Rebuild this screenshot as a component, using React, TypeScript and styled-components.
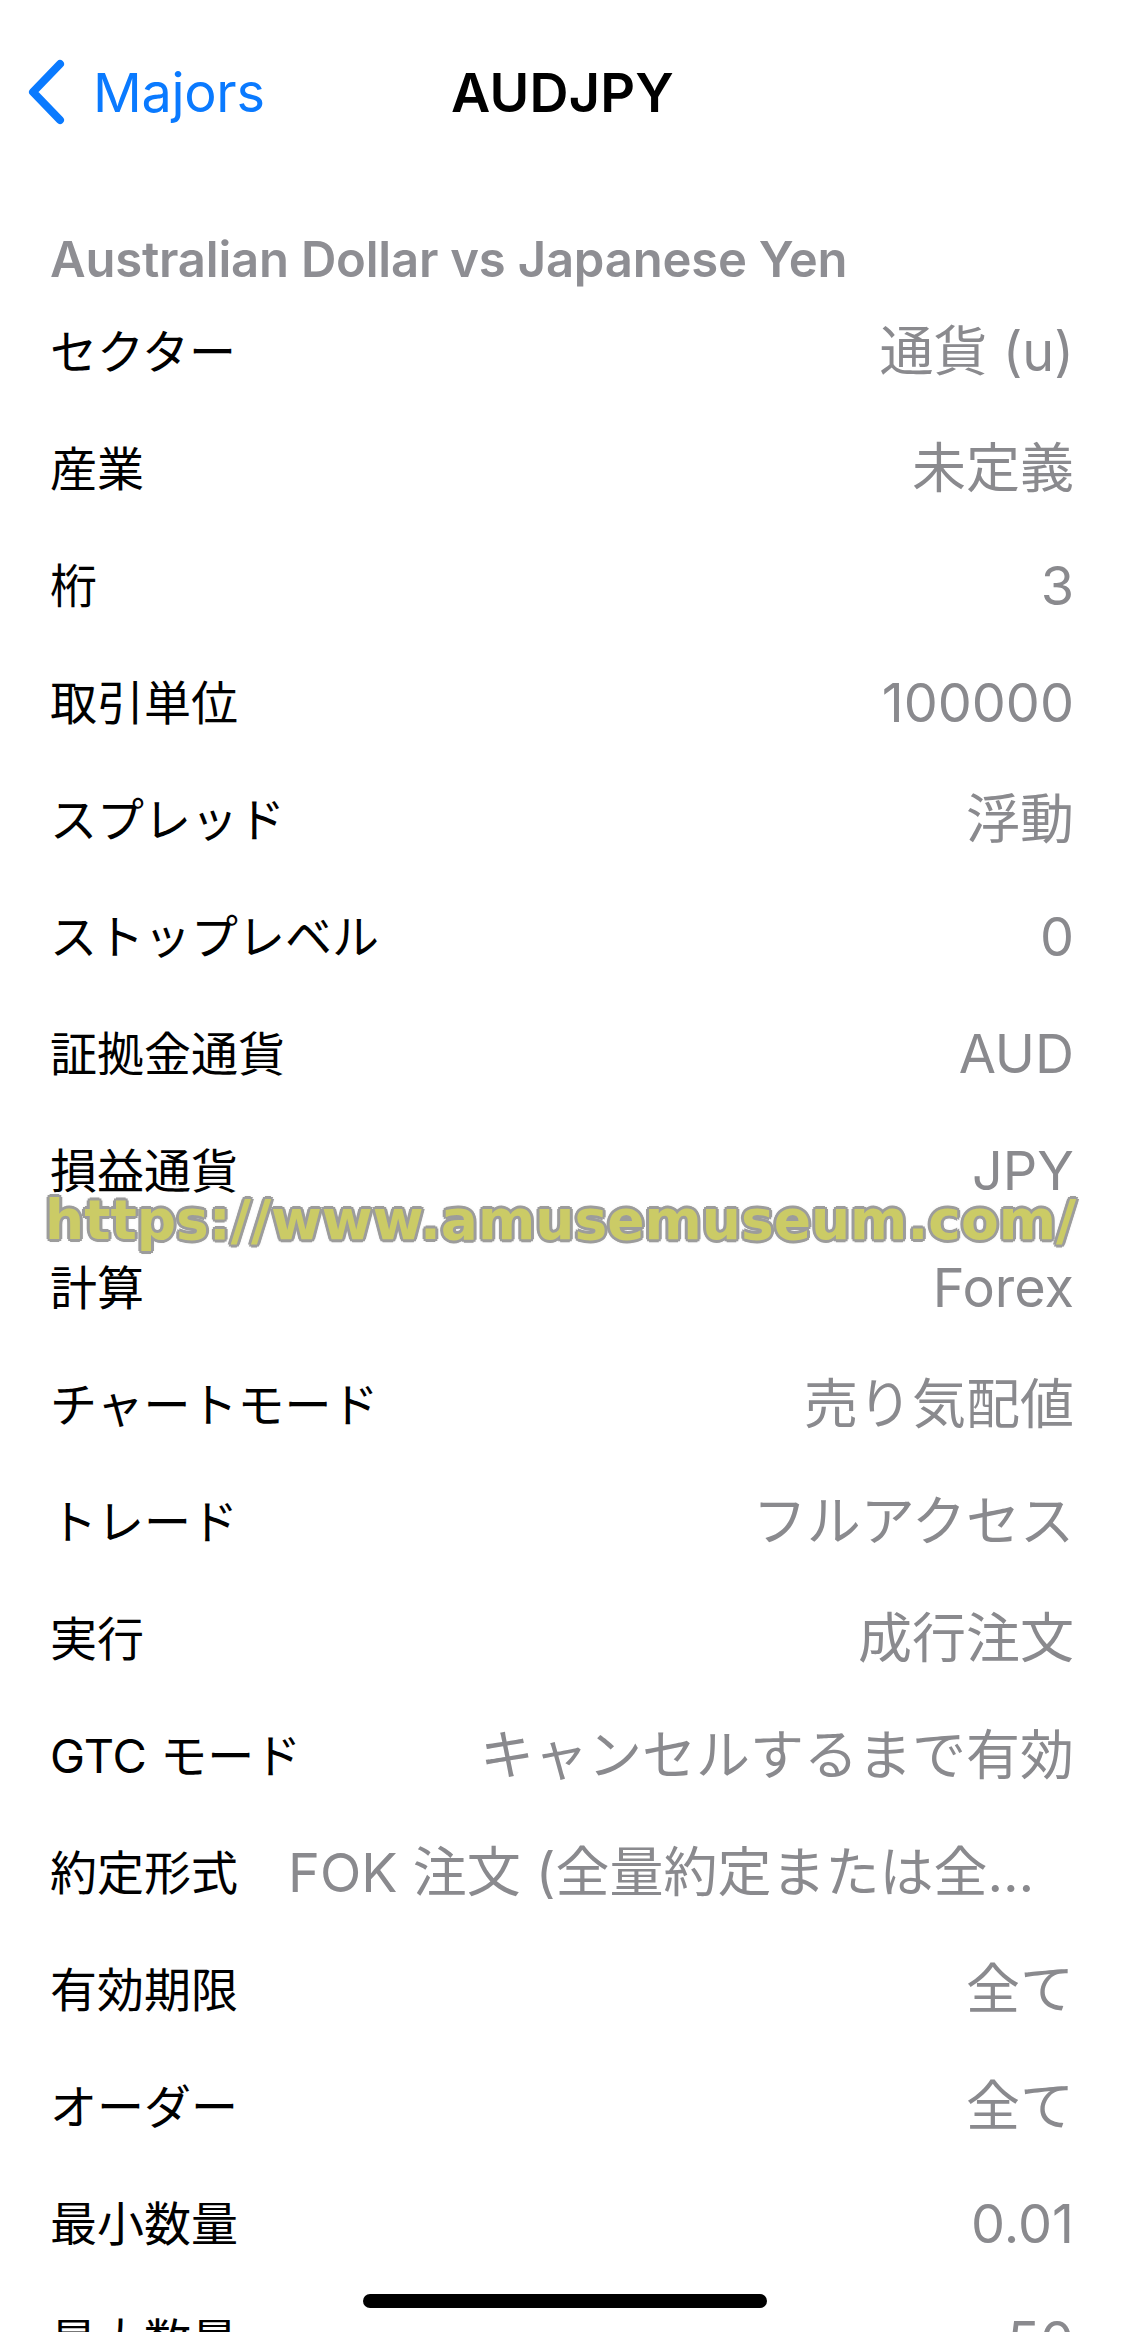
import React from "react";
import styled, { createGlobalStyle } from "styled-components";

const GlobalStyle = createGlobalStyle`
  html, body {
    margin: 0;
    padding: 0;
    background: #ffffff;
  }
  body {
    font-family: Inter, "Noto Sans CJK JP", sans-serif;
    -webkit-font-smoothing: antialiased;
  }
`;

const Screen = styled.div`
  position: relative;
  width: 1125px;
  height: 2332px;
  overflow: hidden;
  background: #ffffff;
  display: flex;
  flex-direction: column;
`;

const NavBar = styled.header`
  position: relative;
  height: 184px;
  display: flex;
  align-items: center;
  justify-content: center;
  flex-shrink: 0;
`;

const BackButton = styled.button`
  position: absolute;
  left: 27px;
  top: 50%;
  transform: translateY(-50%);
  display: flex;
  align-items: center;
  gap: 26px;
  border: 0;
  background: transparent;
  padding: 0;
  color: #0a7aff;
  font-family: Inter, sans-serif;
  font-size: 54px;
  font-weight: 400;
  letter-spacing: -0.3px;
  cursor: pointer;
`;

const Title = styled.h1`
  margin: 0;
  font-family: Inter, sans-serif;
  font-size: 54px;
  font-weight: 600;
  color: #000000;
  letter-spacing: 0.2px;
`;

const SectionHeading = styled.h2`
  margin: 0;
  padding: 46px 50px 4px;
  line-height: 60px;
  font-family: Inter, sans-serif;
  font-size: 49px;
  font-weight: 600;
  color: #8e8e93;
  letter-spacing: -0.2px;
`;

const List = styled.div`
  display: flex;
  flex-direction: column;
`;

const Row = styled.div`
  height: 117px;
  flex-shrink: 0;
  display: flex;
  align-items: center;
  justify-content: space-between;
  gap: 50px;
  padding: 0 51px 0 50px;
  line-height: 1.2;
`;

const Label = styled.span`
  flex-shrink: 0;
  font-size: 47px;
  color: #000000;
  white-space: nowrap;
`;

const Value = styled.span`
  flex: 1;
  min-width: 0;
  text-align: right;
  font-size: 54px;
  color: #8a8a8e;
  white-space: nowrap;
  overflow: hidden;
  text-overflow: ellipsis;
`;

const Watermark = styled.div`
  position: absolute;
  left: 45px;
  top: 1188px;
  font-family: "DejaVu Sans", sans-serif;
  font-weight: 700;
  font-size: 55px;
  letter-spacing: 0;
  color: #cbcb66;
  white-space: nowrap;
  pointer-events: none;
  text-shadow:
    3px 0 0 #9c9c9c, -3px 0 0 #9c9c9c, 0 3px 0 #9c9c9c, 0 -3px 0 #9c9c9c,
    2px 2px 0 #9c9c9c, -2px 2px 0 #9c9c9c, 2px -2px 0 #9c9c9c, -2px -2px 0 #9c9c9c,
    0 0 4px #a0a0a0;
`;

const HomeIndicator = styled.div`
  position: absolute;
  left: 50%;
  bottom: 24px;
  width: 404px;
  height: 14px;
  margin-left: -200px;
  border-radius: 7px;
  background: #000000;
`;

const ChevronIcon = () => (
  <svg width="40" height="66" viewBox="0 0 40 66" fill="none">
    <path
      d="M33 5 L6 33 L33 61"
      stroke="#0a7aff"
      strokeWidth="8"
      strokeLinecap="round"
      strokeLinejoin="round"
    />
  </svg>
);

const specs: [string, string][] = [
  ["セクター", "通貨 (u)"],
  ["産業", "未定義"],
  ["桁", "3"],
  ["取引単位", "100000"],
  ["スプレッド", "浮動"],
  ["ストップレベル", "0"],
  ["証拠金通貨", "AUD"],
  ["損益通貨", "JPY"],
  ["計算", "Forex"],
  ["チャートモード", "売り気配値"],
  ["トレード", "フルアクセス"],
  ["実行", "成行注文"],
  ["GTC モード", "キャンセルするまで有効"],
  ["約定形式", "FOK 注文 (全量約定または全量取消)"],
  ["有効期限", "全て"],
  ["オーダー", "全て"],
  ["最小数量", "0.01"],
  ["最大数量", "50"],
];

export default function App() {
  return (
    <>
      <GlobalStyle />
      <Screen>
        <NavBar>
          <BackButton>
            <ChevronIcon />
            <span>Majors</span>
          </BackButton>
          <Title>AUDJPY</Title>
        </NavBar>
        <SectionHeading>Australian Dollar vs Japanese Yen</SectionHeading>
        <List>
          {specs.map(([label, value]) => (
            <Row key={label}>
              <Label>{label}</Label>
              <Value>{value}</Value>
            </Row>
          ))}
        </List>
        <Watermark>https://www.amusemuseum.com/</Watermark>
        <HomeIndicator />
      </Screen>
    </>
  );
}
